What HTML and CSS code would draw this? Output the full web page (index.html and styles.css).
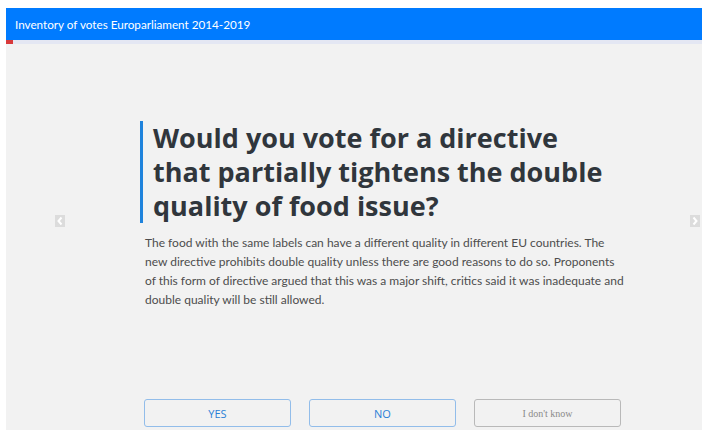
FILE: index.html
```html
<!DOCTYPE html>
<html lang="en">
<head>
<meta charset="utf-8">
<title>Inventory of votes Europarliament 2014-2019</title>
<link rel="stylesheet" href="styles.css">
</head>
<body>
<div class="app">
  <header class="topbar">Inventory of votes Europarliament 2014-2019</header>
  <div class="progress"><div class="progress-fill" style="width: 7px"></div></div>
  <main class="stage">
    <div class="question-row">
      <button class="nav nav-prev" aria-label="Previous">
        <svg width="10" height="12" viewBox="0 0 10 12"><path d="M6.5 2.5 L3.5 6 L6.5 9.5" fill="none" stroke="#fff" stroke-width="2"/></svg>
      </button>
      <section class="question">
        <h1 class="question-title">Would you vote for a directive that partially tightens the double quality of food issue?</h1>
        <p class="question-text">The food with the same labels can have a different quality in different EU countries. The new directive prohibits double quality unless there are good reasons to do so. Proponents of this form of directive argued that this was a major shift, critics said it was inadequate and double quality will be still allowed.</p>
      </section>
      <button class="nav nav-next" aria-label="Next">
        <svg width="10" height="12" viewBox="0 0 10 12"><path d="M3.5 2.5 L6.5 6 L3.5 9.5" fill="none" stroke="#fff" stroke-width="2"/></svg>
      </button>
    </div>
    <div class="answers">
      <button class="answer answer-vote">YES</button>
      <button class="answer answer-vote">NO</button>
      <button class="answer answer-skip">I don't know</button>
    </div>
  </main>
</div>
</body>
</html>
```

FILE: styles.css
```css
html, body {
  height: 100%;
}

body {
  margin: 8px 0 0 6px;
  background: #ffffff;
  font-family: "Open Sans", "Noto Sans", sans-serif;
  overflow: hidden;
}

.app {
  min-height: 422px;
  background: #f2f2f2;
  display: flex;
  flex-direction: column;
}

.topbar {
  height: 32px;
  background: #007bff;
  color: #ffffff;
  font-family: Lato, "Open Sans", sans-serif;
  font-size: 11.7px;
  line-height: 32px;
  padding-left: 9px;
  box-shadow: 0 1px 0 #3f94f5;
}

.progress {
  height: 4px;
  background: #e4e7f3;
}

.progress-fill {
  height: 100%;
  background: #d8393a;
}

.stage {
  flex: 1;
  display: flex;
  flex-direction: column;
  padding-top: 77px;
}

.question-row {
  display: flex;
  align-items: center;
}

.nav {
  width: 10px;
  height: 12px;
  margin-top: 12px;
  padding: 0;
  border: 0;
  background: #dcdcdc;
  display: flex;
  align-items: center;
  justify-content: center;
}

.nav-prev {
  margin-left: 49px;
}

.nav-next {
  margin-left: auto;
  margin-right: 2px;
}

.question {
  margin-left: 75px;
  width: 490px;
}

.question-title {
  margin: 0;
  max-width: 453px;
  padding-left: 10px;
  border-left: 3px solid #1f83dc;
  font-size: 27px;
  line-height: 34px;
  font-weight: 700;
  color: #30363c;
}

.question-text {
  margin: 10px 0 0 5px;
  width: 479px;
  font-family: Lato, "Open Sans", sans-serif;
  font-size: 12px;
  line-height: 19px;
  color: #4d4d4d;
}

.answers {
  display: flex;
  gap: 18px;
  margin-top: 90px;
  margin-left: 138px;
}

.answer {
  width: 147px;
  height: 28px;
  border-radius: 3px;
  background: transparent;
  padding: 0;
}

.answer-vote {
  border: 1px solid #92bdea;
  color: #2a80d6;
  font-family: "Open Sans", sans-serif;
  font-size: 11px;
}

.answer-skip {
  border: 1px solid #b9b9b9;
  color: #8a8a8a;
  font-family: "Liberation Serif", serif;
  font-size: 10px;
}
```
